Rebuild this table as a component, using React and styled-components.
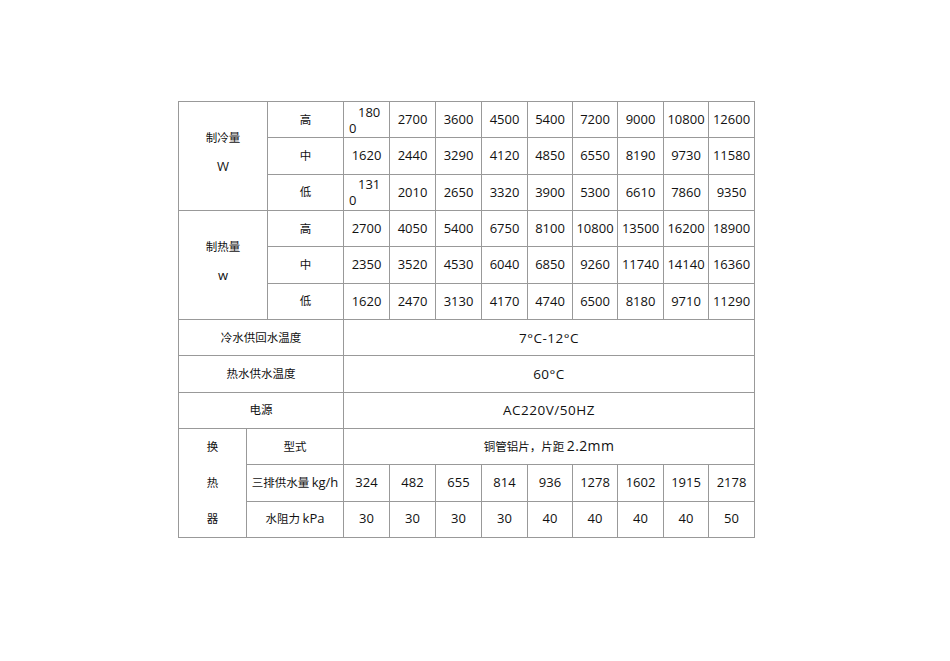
import React from "react";
import styled, { createGlobalStyle } from "styled-components";

const GlobalStyle = createGlobalStyle`
  body {
    margin: 0;
    background: #ffffff;
    font-family: "Open Sans", "Noto Sans", "Noto Sans CJK SC", sans-serif;
    color: #111111;
  }
`;

const Page = styled.div`
  width: 950px;
  height: 661px;
  padding: 101px 0 0 178px;
  box-sizing: border-box;
`;

const Table = styled.table`
  border-collapse: collapse;
  table-layout: fixed;
  width: 577px;
`;

const Row = styled.tr`
  height: 36.33px;
`;

const Cell = styled.td`
  border: 1px solid #999999;
  padding: 0;
  text-align: center;
  vertical-align: middle;
  font-size: ${(p) => (p.$cjk ? "11.5px" : "13px")};
  font-family: ${(p) =>
    p.$cjk
      ? '"Noto Sans CJK SC", "Noto Sans", sans-serif'
      : '"Open Sans", "Noto Sans", "Noto Sans CJK SC", sans-serif'};
  white-space: nowrap;
  line-height: 1.2;
`;

const WideCell = styled(Cell)`
  font-size: 13.5px;
  letter-spacing: 0.5px;
`;

const Stack = styled.div`
  display: flex;
  flex-direction: column;
  align-items: center;
  gap: ${(p) => p.$gap}px;
  margin-top: -7px;
  font-family: "Noto Sans CJK SC", sans-serif;
  font-size: 11.5px;
`;

const Unit = styled.span`
  font-family: "Open Sans", sans-serif;
  font-size: 13px;
`;

const Wrapped = styled.div`
  text-align: left;
  padding-left: 5px;
  line-height: 16px;
  text-indent: 9px;
`;

const Vertical = styled.div`
  display: flex;
  flex-direction: column;
  justify-content: space-around;
  height: 108px;
  font-family: "Noto Sans CJK SC", sans-serif;
  font-size: 11.5px;
`;

const Mix = styled.span`
  font-family: "Open Sans", sans-serif;
  font-size: ${(p) => p.$size || 13}px;
  letter-spacing: ${(p) => p.$spacing || 0}px;
`;

const cooling = [
  ["高", ["1800", "2700", "3600", "4500", "5400", "7200", "9000", "10800", "12600"]],
  ["中", ["1620", "2440", "3290", "4120", "4850", "6550", "8190", "9730", "11580"]],
  ["低", ["1310", "2010", "2650", "3320", "3900", "5300", "6610", "7860", "9350"]],
];

const heating = [
  ["高", ["2700", "4050", "5400", "6750", "8100", "10800", "13500", "16200", "18900"]],
  ["中", ["2350", "3520", "4530", "6040", "6850", "9260", "11740", "14140", "16360"]],
  ["低", ["1620", "2470", "3130", "4170", "4740", "6500", "8180", "9710", "11290"]],
];

const flow = ["324", "482", "655", "814", "936", "1278", "1602", "1915", "2178"];
const resistance = ["30", "30", "30", "30", "40", "40", "40", "40", "50"];

const widths = [68, 21, 76, 46, 46, 46, 46, 45, 45, 46, 45, 46];

const Value = ({ v, wrap }) =>
  wrap ? (
    <Cell>
      <Wrapped>
        {v.slice(0, 3)}
        <br />
        {v.slice(3)}
      </Wrapped>
    </Cell>
  ) : (
    <Cell>{v}</Cell>
  );

const Block = ({ title, unit, rows, wrapFirst, gap }) =>
  rows.map(([level, values], i) => (
    <Row key={level}>
      {i === 0 && (
        <Cell colSpan={2} rowSpan={3}>
          <Stack $gap={gap}>
            <span>{title}</span>
            <Unit>{unit}</Unit>
          </Stack>
        </Cell>
      )}
      <Cell $cjk>{level}</Cell>
      {values.map((v, j) => (
        <Value key={j} v={v} wrap={wrapFirst && j === 0 && level !== "中"} />
      ))}
    </Row>
  ));

export default function App() {
  return (
    <Page>
      <GlobalStyle />
      <Table>
        <colgroup>
          {widths.map((w, i) => (
            <col key={i} style={{ width: w }} />
          ))}
        </colgroup>
        <tbody>
          <Block title="制冷量" unit="W" rows={cooling} wrapFirst gap={14} />
          <Block title="制热量" unit="w" rows={heating} gap={14} />
          <Row>
            <Cell colSpan={3} $cjk>冷水供回水温度</Cell>
            <WideCell colSpan={9}>7°C-12°C</WideCell>
          </Row>
          <Row>
            <Cell colSpan={3} $cjk>热水供水温度</Cell>
            <WideCell colSpan={9}>60°C</WideCell>
          </Row>
          <Row>
            <Cell colSpan={3} $cjk>电源</Cell>
            <WideCell colSpan={9}>AC220V/50HZ</WideCell>
          </Row>
          <Row>
            <Cell rowSpan={3} $cjk>
              <Vertical>
                <span>换</span>
                <span>热</span>
                <span>器</span>
              </Vertical>
            </Cell>
            <Cell colSpan={2} $cjk>型式</Cell>
            <Cell colSpan={9} $cjk>
              铜管铝片，片距 <Mix $size={14} $spacing={0.4}>2.2mm</Mix>
            </Cell>
          </Row>
          <Row>
            <Cell colSpan={2} $cjk>
              三排供水量 <Mix>kg/h</Mix>
            </Cell>
            {flow.map((v, j) => (
              <Cell key={j}>{v}</Cell>
            ))}
          </Row>
          <Row>
            <Cell colSpan={2} $cjk>
              水阻力 <Mix>kPa</Mix>
            </Cell>
            {resistance.map((v, j) => (
              <Cell key={j}>{v}</Cell>
            ))}
          </Row>
        </tbody>
      </Table>
    </Page>
  );
}
